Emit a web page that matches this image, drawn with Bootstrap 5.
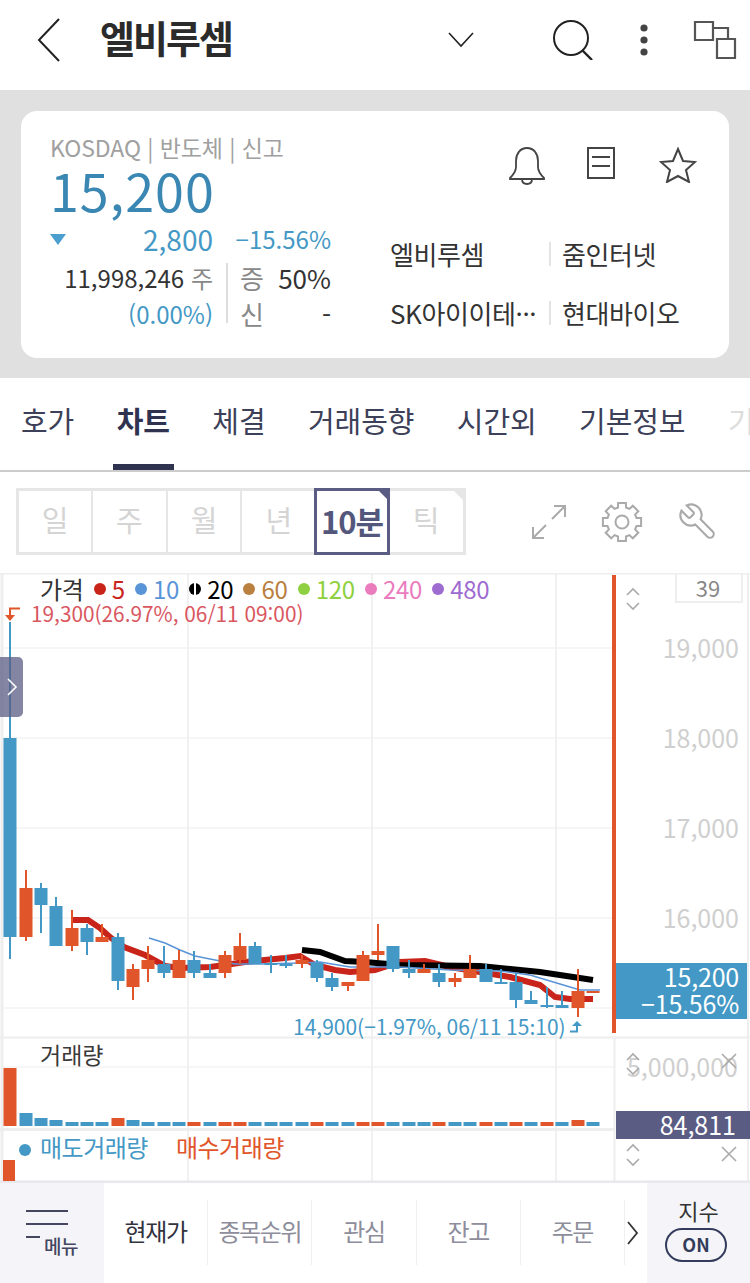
<!DOCTYPE html>
<html lang="ko">
<head>
<meta charset="UTF-8">
<title>엘비루셈</title>
<link href="https://cdn.jsdelivr.net/npm/bootstrap@5.3.0/dist/css/bootstrap.min.css" rel="stylesheet">
<style>
    html, body { margin: 0; width: 750px; height: 1283px; overflow: hidden; }
    body { font-family: "Noto Sans CJK KR", "Noto Sans", sans-serif; background: #fff; color: #333; }

    .top-bar { height: 90px; padding: 0 0 10px 36px; }
    .top-title { font-size: 38px; font-weight: 700; letter-spacing: -2px; color: #2b2b2b; margin-left: 38px; width: 348px; line-height: 1; padding-bottom: 6px; }
    .icon-search { margin-left: 78px; }
    .icon-dots { margin-left: 45px; }
    .icon-windows { margin-left: 44px; }

    .summary-zone { height: 288px; background: #e0e0e0; padding: 21px 21px 20px; }
    .summary-box { height: 247px; border: 0; border-radius: 16px; padding: 20px 30px 0 29px; }
    .left-col { width: 281px; }
    .market-line { font-size: 23px; line-height: 32px; color: #a0a0a0; letter-spacing: -.1px; }
    .now-price { font-size: 52px; line-height: 58px; color: #3a87b3; margin-top: -2px; letter-spacing: 1px; }
    .blue-txt { color: #4498c5; }
    .change-row { height: 36px; line-height: 36px; margin-top: 2px; }
    .down-mark { width: 0; height: 0; border-left: 8px solid transparent; border-right: 8px solid transparent; border-top: 11px solid #4a9fce; margin-top: 13px; }
    .change-amt { font-size: 28px; width: 147px; text-align: right; }
    .change-pct { font-size: 24px; width: 118px; text-align: right; }
    .vol-grid { margin-top: 3px; font-size: 24px; }
    .vol-left { width: 178px; text-align: right; border-right: 2px solid #ddd; padding-right: 13px; height: 60px; margin-top: 3px; }
    .vol-left div { height: 36px; line-height: 30px; white-space: nowrap; }
    .vol-right { width: 103px; padding-left: 12px; margin-top: 3px; font-size: 26px; }
    .vol-right div { height: 36px; line-height: 30px; }
    .gray-k { color: #888; }
    .side-col { width: 309px; }
    .act-icons { height: 60px; gap: 44px; padding-right: 2px; padding-top: 16px; }
    .icon-bell { margin-right: -2px; }
    .peer-grid { margin-top: 33px; font-size: 26px; letter-spacing: -.4px; }
    .peer-row { height: 59px; align-items: center; }
    .peer-a { width: 159px; white-space: nowrap; overflow: hidden; }
    .peer-b { border-left: 2px solid #e4e4e4; padding-left: 11px; line-height: 24px; height: 24px; white-space: nowrap; }

    .tab-strip { height: 94px; border-bottom: 2px solid #ccc; padding-left: 21px; gap: 42.5px; overflow: hidden; flex-wrap: nowrap; }
    .tab-strip .nav-link { padding: 0; height: 92px; line-height: 84px; font-size: 29px; letter-spacing: -.1px; color: #3c4058; position: relative; white-space: nowrap; }
    .tab-strip .nav-link.active { font-weight: 700; color: #2f3350; }
    .tab-strip .nav-link.active::after { content: ""; position: absolute; left: -4px; right: -4px; bottom: 0; height: 6px; background: #2f3350; }
    .tab-strip .nav-link.faded { color: #ddd; }

    .tool-row { height: 101px; padding: 16px 0 0 16px; }
    .range-set { height: 67px; border: 3px solid #e6e6e6; width: 450px; }
    .range-cell { width: 74.7px; margin-top: -3px; height: 67px; border-right: 2.5px solid #e6e6e6; text-align: center; line-height: 63px; font-size: 29px; color: #d4d4d4; position: relative; }
    .range-cell:first-child { width: 74px; }
    .range-cell:last-child { border-right: 0; width: 72px; }
    .range-cell.on { border: 3px solid #5a5c83; color: #54577c; font-weight: 700; margin-left: -3px; width: 76px; line-height: 59px; font-size: 31px; letter-spacing: -1px; white-space: nowrap; }
    .range-cell.corner::after { content: ""; position: absolute; right: -3px; top: 0; border-top: 14px solid #e6e6e6; border-left: 14px solid transparent; }
    .range-cell.on.corner::after { border-top-color: #5a5c83; right: -3px; top: -3px; }
    .tool-icons { gap: 34px; margin-left: 65px; height: 67px; }

    .chart-board { position: relative; height: 610px; width: 750px; }
    .chart-svg { display: block; }
    .legend-row { position: absolute; left: 40px; top: 0; height: 32px; line-height: 32px; font-size: 24px; letter-spacing: -.3px; gap: 7.2px; }
    .legend-row i { display: inline-block; width: 12px; height: 12px; border-radius: 50%; margin: 0 6px 0 3px; }
    .legend-row span { display: flex; align-items: center; }
    .legend-row i.split-dot { background: linear-gradient(90deg, #000 42%, #fff 42%, #fff 58%, #000 58%); }
    .pane-label { position: absolute; left: 40px; top: 466px; font-size: 23px; line-height: 30px; color: #3a3a3a; }
    .price-tag { position: absolute; left: 616px; top: 390px; width: 131px; height: 56px; background: #4498c5; color: #fff; text-align: right; font-size: 25px; line-height: 27px; padding: 0 8px 0 0; letter-spacing: -.2px; }
    .vol-tag { position: absolute; left: 616px; top: 538px; width: 134px; height: 28px; background: #5a5c83; color: #fff; text-align: right; font-size: 25px; line-height: 26px; padding-right: 14px; }
    .side-handle { position: absolute; left: 0; top: 84px; width: 23px; height: 60px; background: rgba(90, 92, 131, .75); border-radius: 0 5px 5px 0; }
    .trade-legend { position: absolute; left: 19px; top: 558px; font-size: 24px; line-height: 32px; letter-spacing: -.5px; gap: 28px; }
    .trade-legend i { display: inline-block; width: 12px; height: 12px; border-radius: 50%; background: #4498c5; margin-right: 9px; vertical-align: 1px; }
    .sell-c { color: #4498c5; }
    .buy-c { color: #e0562a; }
    .axis-txt { font-family: "Noto Sans CJK KR", "Noto Sans", sans-serif; }

    .foot-bar { height: 100px; }
    .foot-menu { width: 104px; background: #f5f5f9; position: relative; }
    .menu-word { position: absolute; left: 44px; top: 50px; font-size: 19px; line-height: 26px; font-weight: 500; color: #44475f; letter-spacing: -.5px; }
    .foot-tabs { width: 543px; padding-top: 17px; }
    .foot-tab { width: 104.2px; height: 65px; border-right: 1px solid #f0f0f3; text-align: center; line-height: 62px; font-size: 24px; letter-spacing: -1.4px; color: #8d8d9b; }
    .foot-tab.on { color: #33333f; }
    .foot-more { width: 22px; height: 65px; padding-left: 2px; }
    .foot-index { width: 103px; background: #f5f5f9; text-align: center; color: #333; font-size: 22px; line-height: 30px; padding-top: 12px; }
    .on-pill { width: 62px; height: 34px; margin: 3px 0 0 18px; border: 2px solid #333c5a; border-radius: 17px; font-size: 18px; font-weight: 700; line-height: 28px; color: #333c5a; }
</style>
</head>
<body>
    <div class="top-bar d-flex align-items-center bg-white">
        <svg width="26" height="44" viewBox="0 0 26 44"><path d="M23 1 3 22l20 21" fill="none" stroke="#222" stroke-width="2"/></svg>
        <div class="top-title">엘비루셈</div>
        <svg width="26" height="16" viewBox="0 0 26 16"><path d="M1 1l12 13L25 1" fill="none" stroke="#222" stroke-width="1.6"/></svg>
        <svg class="icon-search" width="42" height="40" viewBox="0 0 42 40"><circle cx="19" cy="18" r="17" fill="none" stroke="#222" stroke-width="2"/><path d="M30 30l10 10" stroke="#222" stroke-width="2.4"/></svg>
        <svg class="icon-dots" width="10" height="34" viewBox="0 0 10 34"><circle cx="5" cy="5" r="3.6" fill="#444"/><circle cx="5" cy="17" r="3.6" fill="#444"/><circle cx="5" cy="29" r="3.6" fill="#444"/></svg>
        <svg class="icon-windows" width="44" height="40" viewBox="0 0 44 40"><path d="M2 2h18v18H2zM20 8h15v10M24 19h18v19H24z" fill="none" stroke="#555" stroke-width="2.2"/></svg>
    </div>

    <div class="summary-zone">
        <div class="card summary-box flex-row">
            <div class="left-col">
                <div class="market-line">KOSDAQ | 반도체 | 신고</div>
                <div class="now-price">15,200</div>
                <div class="change-row d-flex blue-txt">
                    <div class="down-mark"></div>
                    <div class="change-amt">2,800</div>
                    <div class="change-pct">−15.56%</div>
                </div>
                <div class="d-flex vol-grid">
                    <div class="vol-left">
                        <div>11,998,246 <span class="gray-k">주</span></div>
                        <div class="blue-txt">(0.00%)</div>
                    </div>
                    <div class="vol-right">
                        <div class="d-flex justify-content-between"><span class="gray-k">증</span><span>50%</span></div>
                        <div class="d-flex justify-content-between"><span class="gray-k">신</span><span>-</span></div>
                    </div>
                </div>
            </div>
            <div class="side-col ms-auto">
                <div class="d-flex act-icons justify-content-end">
                    <svg class="icon-bell" width="36" height="38" viewBox="0 0 36 38"><path d="M18 1c7 0 11 6 11 13v6c0 5 3 8 6 11v1H1v-1c3-3 6-6 6-11v-6C7 7 11 1 18 1zM13 32c0 3 2 5 5 5s5-2 5-5" fill="none" stroke="#444" stroke-width="1.8"/></svg>
                    <svg width="28" height="32" viewBox="0 0 28 32"><path d="M1 1h26v30H1zM5 10h18M5 19h18" fill="none" stroke="#444" stroke-width="2"/></svg>
                    <svg width="38" height="36" viewBox="0 0 38 36"><path d="M19 2l5 12 12 1-9 8 3 12-11-6-11 6 3-12-9-8 12-1z" fill="none" stroke="#444" stroke-width="2"/></svg>
                </div>
                <div class="peer-grid">
                    <div class="d-flex peer-row"><div class="peer-a">엘비루셈</div><div class="peer-b">줌인터넷</div></div>
                    <div class="d-flex peer-row"><div class="peer-a">SK아이이테···</div><div class="peer-b">현대바이오</div></div>
                </div>
            </div>
        </div>
    </div>

    <nav class="nav tab-strip bg-white">
        <a class="nav-link">호가</a>
        <a class="nav-link active">차트</a>
        <a class="nav-link">체결</a>
        <a class="nav-link">거래동향</a>
        <a class="nav-link">시간외</a>
        <a class="nav-link">기본정보</a>
        <a class="nav-link faded">기</a>
    </nav>

    <div class="tool-row d-flex">
        <div class="range-set d-flex">
            <div class="range-cell">일</div>
            <div class="range-cell">주</div>
            <div class="range-cell">월</div>
            <div class="range-cell">년</div>
            <div class="range-cell on corner">10분</div>
            <div class="range-cell corner">틱</div>
        </div>
        <div class="tool-icons d-flex align-items-center">
            <svg width="36" height="36" viewBox="0 0 36 36"><path d="M21 15 34 2M23 2h11v11M15 21 2 34M13 34H2V23" fill="none" stroke="#aaa" stroke-width="2"/></svg>
            <svg width="42" height="42" viewBox="0 0 42 42"><path id="cogPath" fill="none" stroke="#aaa" stroke-width="2"/><circle cx="21" cy="21" r="6.5" fill="none" stroke="#aaa" stroke-width="2"/></svg>
            <svg width="42" height="42" viewBox="0 0 24 24"><path transform="translate(24,0) scale(-1,1)" d="M14.7 6.3a1 1 0 0 0 0 1.4l1.6 1.6a1 1 0 0 0 1.4 0l3.77-3.77a6 6 0 0 1-7.94 7.94l-6.91 6.91a2.12 2.12 0 0 1-3-3l6.91-6.91a6 6 0 0 1 7.94-7.94l-3.76 3.76z" fill="none" stroke="#aaa" stroke-width="1.2"/></svg>
        </div>
    </div>

    <div class="chart-board">
        <svg id="chartSvg" class="chart-svg" width="750" height="610" viewBox="0 573 750 610"></svg>
        <div class="legend-row d-flex" id="legendRow"></div>
        <div class="side-handle d-flex align-items-center justify-content-center">
            <svg width="12" height="20" viewBox="0 0 12 20"><path d="M2 2l8 8-8 8" fill="none" stroke="#fff" stroke-width="1.6"/></svg>
        </div>
        <div class="price-tag">15,200<br>−15.56%</div>
        <div class="pane-label">거래량</div>
        <div class="vol-tag">84,811</div>
        <div class="trade-legend d-flex">
            <span class="sell-c"><i></i>매도거래량</span>
            <span class="buy-c">매수거래량</span>
        </div>
    </div>

    <div class="foot-bar d-flex bg-white">
        <div class="foot-menu">
            <svg class="d-block" width="104" height="60" viewBox="0 0 104 60"><path d="M26 28h42M26 41h42M26 54h14" stroke="#44475f" stroke-width="2"/></svg>
            <div class="menu-word">메뉴</div>
        </div>
        <div class="foot-tabs d-flex">
            <div class="foot-tab on">현재가</div>
            <div class="foot-tab">종목순위</div>
            <div class="foot-tab">관심</div>
            <div class="foot-tab">잔고</div>
            <div class="foot-tab">주문</div>
            <div class="foot-more d-flex align-items-center">
                <svg width="12" height="24" viewBox="0 0 12 24"><path d="M1 1l9 11-9 11" fill="none" stroke="#333" stroke-width="1.8"/></svg>
            </div>
        </div>
        <div class="foot-index">
            지수
            <div class="on-pill">ON</div>
        </div>
    </div>

    <script>
        const BLUE = '#4498c5', ORANGE = '#e0562a';
        // x centre, body top, body bottom, wick top, wick bottom, colour (b/o)
        const candles = [
            [10,738,937,622,959,'b'],[26,888,937,870,941,'o'],[41,888,905,883,933,'b'],[56,906,946,897,946,'b'],
            [72,928,946,910,951,'o'],[87,928,942,924,955,'b'],[102,937,942,924,942,'o'],[118,937,981,933,990,'b'],
            [133,969,987,964,1000,'o'],[148,960,969,946,982,'o'],[164,964,973,946,978,'b'],[179,960,978,950,978,'o'],
            [194,960,973,951,978,'b'],[210,973,978,964,978,'b'],[225,955,973,951,978,'o'],[240,946,960,933,964,'o'],
            [255,946,964,942,964,'b'],[271,963,965,955,973,'b'],[286,964,965,955,968,'b'],[302,960,964,955,968,'o'],
            [317,963,978,960,982,'b'],[332,978,987,973,991,'b'],[348,982,986,982,991,'o'],[363,955,981,951,981,'o'],
            [378,951,955,924,960,'o'],[393,946,969,946,972,'b'],[409,969,973,960,978,'b'],[424,969,973,964,973,'o'],
            [439,973,982,964,987,'b'],[455,978,982,973,987,'o'],[470,969,978,955,978,'o'],[486,969,982,964,982,'b'],
            [501,982,983,969,983,'b'],[516,982,1000,973,1008,'b'],[531,1000,1004,991,1004,'b'],[547,1005,1007,987,1008,'b'],
            [562,1005,1008,991,1008,'b'],[578,991,1008,969,1017,'o'],[593,991,992,991,992,'o']
        ];
        const redLine = '73,920 88,920 100,928 111,938 124,947 145,955 165,966 180,968 210,967 225,965 245,962 285,958 300,956 315,965 335,970 350,972 375,970 400,962 425,961 450,967 480,972 510,977 540,985 555,997 570,999 593,999';
        const blackLine = '302,950 320,952 345,961 365,962 400,965 480,966 540,972 593,980';
        const thinLine = '149,938 165,943 180,950 195,956 215,960 235,964 260,964 300,963 320,962 350,967 400,967 450,970 500,971 530,975 560,984 580,990 600,990';
        const volOrange = [0,7,12,14,15,20,23,24,28,31,33,35,37];
        const volHeights = {1:13,2:8,3:6,7:8,8:6,37:6};

        let s = '';
        // grid
        [648,738,828,918,1008,1067].forEach(y => s += `<path d="M2 ${y}H614" stroke="#f6f6f6" stroke-width="2"/>`);
        [188,372,556].forEach(x => s += `<path d="M${x} 574V1182" stroke="#f1f1f1" stroke-width="2"/>`);
        s += '<path d="M2 573V1182" stroke="#eee" stroke-width="3"/><path d="M0 573.5H750" stroke="#eee" stroke-width="2"/><path d="M0 1037.5H750" stroke="#eee" stroke-width="2"/><path d="M0 1129.5H614" stroke="#eee" stroke-width="3"/><path d="M614.5 1037V1182M748 573V1182" stroke="#eee" stroke-width="2"/><path d="M0 1182H750" stroke="#e8e8ee" stroke-width="3"/>';
        s += `<rect x="612" y="575" width="4" height="458" fill="${ORANGE}"/>`;
        // moving averages under the candles
        s += `<polyline points="${redLine}" fill="none" stroke="#c9241a" stroke-width="6"/>`;
        s += `<polyline points="${blackLine}" fill="none" stroke="#000" stroke-width="6"/>`;
        s += `<polyline points="${thinLine}" fill="none" stroke="#5a94d8" stroke-width="1.5"/>`;
        candles.forEach(c => {
            const col = c[5] === 'b' ? BLUE : ORANGE;
            s += `<rect x="${c[0]-1}" y="${c[3]}" width="2" height="${c[4]-c[3]}" fill="${col}"/>`;
            s += `<rect x="${c[0]-6.5}" y="${c[1]}" width="13" height="${Math.max(c[2]-c[1],2)}" fill="${col}"/>`;
        });
        // volume bars
        candles.forEach((c, i) => {
            const h = i === 0 ? 58 : (volHeights[i] || 4);
            s += `<rect x="${c[0]-6.5}" y="${1126-h}" width="13" height="${h}" fill="${volOrange.includes(i) ? ORANGE : BLUE}"/>`;
        });
        s += `<rect x="3" y="1160" width="12" height="21" fill="${ORANGE}"/>`;
        // axis text
        const axis = (x, y, t, col, size, anchor) => `<text class="axis-txt" x="${x}" y="${y}" fill="${col}" font-size="${size}" text-anchor="${anchor || 'end'}">${t}</text>`;
        [[19000,658],[18000,748],[17000,838],[16000,928]].forEach(a => s += axis(739, a[1], a[0].toLocaleString('en-US'), '#cfcfcf', 25));
        s += axis(738, 1077, '5,000,000', '#cfcfcf', 25);
        s += axis(31, 622, '19,300(26.97%, 06/11 09:00)', '#d9575f', 20.8, 'start');
        s += axis(293, 1035, '14,900(−1.97%, 06/11 15:10)', BLUE, 21, 'start');
        // callout arrows
        s += `<path d="M20 608.5h-10V617" fill="none" stroke="${ORANGE}" stroke-width="2"/><path d="M5 615h10l-5 6z" fill="${ORANGE}"/>`;
        s += `<path d="M570 1031.5h7V1024" fill="none" stroke="${BLUE}" stroke-width="2"/><path d="M572 1026h10l-5-5z" fill="${BLUE}"/>`;
        // 39 box
        s += '<path d="M676 574v28h66v-28" fill="none" stroke="#eee" stroke-width="2"/>';
        s += axis(708, 597, '39', '#888', 22, 'middle');
        // pane controls
        const updown = (y) => `<path d="M627 ${y+6}l6-6 6 6M627 ${y+14}l6 6 6-6" fill="none" stroke="#aaa" stroke-width="1.6"/>`;
        const closeX = (y) => `<path d="M722 ${y}l14 14M736 ${y}l-14 14" fill="none" stroke="#aaa" stroke-width="1.6"/>`;
        s += updown(589) + updown(1054) + updown(1145) + closeX(1054) + closeX(1147);
        document.getElementById('chartSvg').innerHTML = s;

        // legend
        const legend = [['5','#c9241a'],['10','#5a94d8'],['20','#000'],['60','#b98040'],['120','#8ed03f'],['240','#ea7cbe'],['480','#9e6bd0']];
        document.getElementById('legendRow').innerHTML = '<span>가격</span>' + legend.map(l =>
            l[0] === '20' ? `<span style="color:${l[1]}"><i class="split-dot"></i>${l[0]}</span>`
                          : `<span style="color:${l[1]}"><i style="background:${l[1]}"></i>${l[0]}</span>`).join('');

        // cog outline
        let d = '';
        for (let i = 0; i < 8; i++) {
            const a = i * Math.PI / 4 - Math.PI / 2, w = 0.2, g = 0.27;
            const pt = (r, t) => (21 + r * Math.cos(t)).toFixed(1) + ' ' + (21 + r * Math.sin(t)).toFixed(1);
            d += (i ? 'L' : 'M') + pt(15, a - g) + 'L' + pt(19.5, a - w) + 'L' + pt(19.5, a + w) + 'L' + pt(15, a + g);
        }
        document.getElementById('cogPath').setAttribute('d', d + 'Z');
    </script>
    <script src="https://cdn.jsdelivr.net/npm/bootstrap@5.3.0/dist/js/bootstrap.bundle.min.js"></script>
</body>
</html>
